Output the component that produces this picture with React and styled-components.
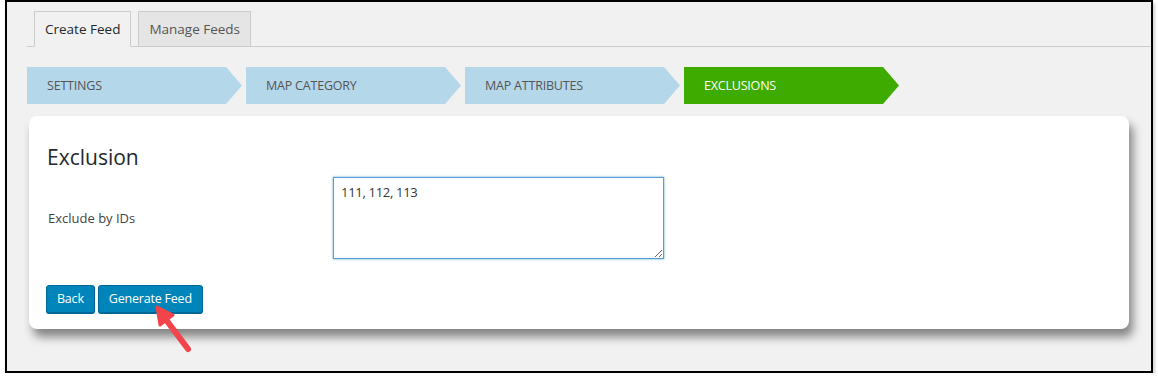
import React from 'react'
import styled, { createGlobalStyle } from 'styled-components'

const GlobalStyle = createGlobalStyle`
  html, body {
    margin: 0;
    padding: 0;
    background: #fff;
  }
  body {
    font-family: "Open Sans", "Noto Sans", sans-serif;
    color: #444;
  }
`

const Frame = styled.div`
  position: relative;
  box-sizing: border-box;
  margin-left: 5px;
  width: 1148px;
  height: 373px;
  border: 2px solid #000;
  background: #f1f1f1;
  box-shadow: 2px 3px 3px rgba(0, 0, 0, 0.18);
  padding: 9px 0 0 20px;
`

const TabNav = styled.nav`
  display: flex;
  gap: 7px;
  padding-left: 7px;
  border-bottom: 1px solid #ccc;
  height: 35px;
`

const Tab = styled.button`
  box-sizing: border-box;
  height: 36px;
  padding: 0 10px;
  margin: 0;
  border: 1px solid #ccc;
  border-bottom: ${p => (p.active ? '1px solid #f1f1f1' : '1px solid #ccc')};
  background: ${p => (p.active ? '#f1f1f1' : '#e5e5e5')};
  color: ${p => (p.active ? '#23282d' : '#555')};
  font-family: inherit;
  font-size: 13.5px;
  font-weight: 500;
  line-height: 34px;
  cursor: pointer;
`

const Steps = styled.ol`
  display: flex;
  gap: 4px;
  list-style: none;
  margin: 20px 0 0;
  padding: 0;
`

const Step = styled.li`
  box-sizing: border-box;
  width: 215px;
  height: 37px;
  padding-left: 20px;
  display: flex;
  align-items: center;
  font-size: 12.5px;
  text-transform: uppercase;
  letter-spacing: -0.2px;
  background: ${p => (p.current ? '#3dab00' : '#b5d7ea')};
  color: ${p => (p.current ? '#fff' : '#555')};
  clip-path: polygon(0 0, 199px 0, 215px 50%, 199px 100%, 0 100%);
`

const Card = styled.section`
  box-sizing: border-box;
  margin: 12px 0 0 2px;
  width: 1100px;
  height: 213px;
  padding: 0 18px;
  background: #fff;
  border-radius: 8px;
  box-shadow: 4px 8px 10px rgba(0, 0, 0, 0.45);
`

const Heading = styled.h2`
  margin: 0;
  padding-top: 27px;
  font-size: 21px;
  font-weight: 400;
  line-height: 28px;
  color: #23282d;
`

const FieldRow = styled.div`
  display: flex;
  align-items: center;
  margin-top: 6px;
`

const Label = styled.label`
  width: 285px;
  font-size: 13px;
  color: #444;
  padding-left: 1px;
`

const IdsInput = styled.textarea`
  box-sizing: border-box;
  width: 331px;
  height: 82px;
  margin: 0;
  padding: 4px 7px;
  border: 1px solid #5b9dd9;
  box-shadow: 0 0 2px rgba(30, 140, 190, 0.8);
  outline: none;
  resize: both;
  font-family: inherit;
  font-size: 13px;
  letter-spacing: -0.3px;
  line-height: 20px;
  color: #32373c;
`

const Actions = styled.div`
  display: flex;
  gap: 3px;
  margin-top: 26px;
  margin-left: -1px;
`

const Button = styled.button`
  box-sizing: border-box;
  height: 28px;
  padding: 0 10px;
  border: 1px solid #006799;
  border-radius: 3px;
  background: #0085ba;
  box-shadow: 0 1px 0 #006799;
  color: #fff;
  font-family: inherit;
  font-size: 12.5px;
  letter-spacing: -0.2px;
  line-height: 26px;
  cursor: pointer;
`

const Pointer = styled.svg`
  position: absolute;
  left: 140px;
  top: 295px;
  pointer-events: none;
`

const steps = ['Settings', 'Map Category', 'Map Attributes', 'Exclusions']

export default function App() {
  return (
    <>
      <GlobalStyle />
      <Frame>
        <TabNav>
          <Tab active>Create Feed</Tab>
          <Tab>Manage Feeds</Tab>
        </TabNav>
        <Steps>
          {steps.map((s, i) => (
            <Step key={s} current={i === steps.length - 1}>
              {s}
            </Step>
          ))}
        </Steps>
        <Card>
          <Heading>Exclusion</Heading>
          <FieldRow>
            <Label htmlFor="ids">Exclude by IDs</Label>
            <IdsInput id="ids" defaultValue="111, 112, 113" />
          </FieldRow>
          <Actions>
            <Button>Back</Button>
            <Button>Generate Feed</Button>
          </Actions>
        </Card>
        <Pointer width="50" height="60" viewBox="0 0 50 60">
          <path d="M41 52 L20 24" stroke="#f2444b" strokeWidth="6" strokeLinecap="round" />
          <path d="M10 10 L26 18 L13 28 Z" fill="#f2444b" stroke="#f2444b" strokeWidth="3" strokeLinejoin="round" />
        </Pointer>
      </Frame>
    </>
  )
}
